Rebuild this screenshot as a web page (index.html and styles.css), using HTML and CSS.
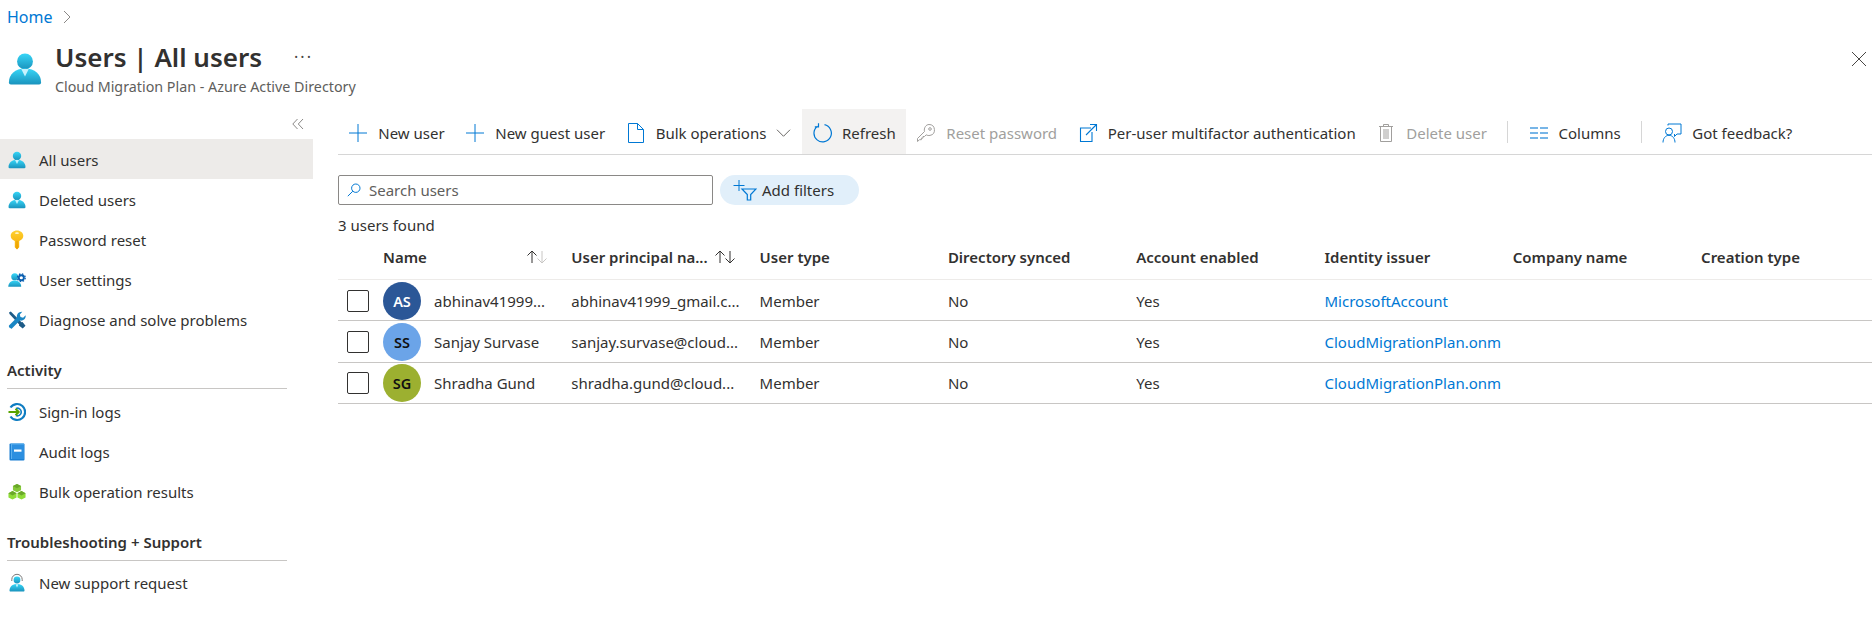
FILE: index.html
```html
<!DOCTYPE html>
<html lang="en">
<head>
    <meta charset="UTF-8">
    <meta name="viewport" content="width=device-width, initial-scale=1.0">
    <title>Users | All users</title>
    <link rel="stylesheet" href="styles.css">
</head>
<body>
    <svg class="defs" width="0" height="0">
        <defs>
            <linearGradient id="cyan" x1="0" y1="0" x2="0" y2="1">
                <stop offset="0" stop-color="#37d6f7"/>
                <stop offset="1" stop-color="#1a93bd"/>
            </linearGradient>
            <linearGradient id="gold" x1="0" y1="0" x2="0" y2="1">
                <stop offset="0" stop-color="#fed02f"/>
                <stop offset="1" stop-color="#f5a800"/>
            </linearGradient>
            <symbol id="person" viewBox="0 0 18 18">
                <circle cx="9" cy="5" r="4.2" fill="url(#cyan)"/>
                <path d="M.5 16c0-4 3.200-7.200 8.500-7.200s8.500 3.200 8.500 7.200c0 .7-.4 1.200-1 1.200h-15c-.6 0-1-.5-1-1.200z" fill="url(#cyan)"/>
                <path d="M7 9l2 4 2-4z" fill="#c6f2fd"/>
            </symbol>
        </defs>
    </svg>

    <nav class="breadcrumb">
        <a href="#">Home</a>
        <svg class="crumb-chevron" viewBox="0 0 8 14"><path d="M1 1l6 6-6 6" fill="none" stroke="#8a8886"/></svg>
    </nav>

    <header class="blade-header">
        <svg class="blade-icon"><use href="#person"/></svg>
        <div class="blade-titles">
            <div class="title-row">
                <h1>Users | All users</h1>
                <span class="more">&middot;&middot;&middot;</span>
            </div>
            <p class="subtitle">Cloud Migration Plan - Azure Active Directory</p>
        </div>
        <svg class="close" viewBox="0 0 14 14"><path d="M0 0l14 14M14 0L0 14" stroke="#484644" fill="none"/></svg>
    </header>

    <div class="blade-body">
        <aside class="sidebar">
            <div class="collapse">
                <svg viewBox="0 0 12 12" width="12" height="12"><path d="M5.500 1L.8 6l4.700 5M11 1L6.300 6l4.700 5" fill="none" stroke="#8a8886"/></svg>
            </div>
            <a class="nav-item selected" href="#"><svg class="nav-icon"><use href="#person"/></svg>All users</a>
            <a class="nav-item" href="#"><svg class="nav-icon"><use href="#person"/></svg>Deleted users</a>
            <a class="nav-item" href="#">
                <svg class="nav-icon" viewBox="0 0 18 20"><path d="M9 .5c3.500 0 6.300 2.300 6.300 5.300 0 2.400-1.600 4.300-4.100 5.200v6.200L9 19.500l-2.200-2.300V11C4.300 10.100 2.700 8.200 2.700 5.800 2.700 2.800 5.500.5 9 .5z" fill="url(#gold)"/><rect x="7.200" y="2.300" width="3.600" height="1.800" rx=".9" fill="#fff3c4"/><path d="M9 11v8" stroke="#e09a00" stroke-width=".8"/></svg>
                Password reset
            </a>
            <a class="nav-item" href="#">
                <svg class="nav-icon" viewBox="0 0 20 18"><circle cx="7.500" cy="5.500" r="3.900" fill="url(#cyan)"/><path d="M.3 16.500c0-4 3-7 7.200-7s7.200 3 7.200 7z" fill="url(#cyan)"/><circle cx="14.800" cy="6.500" r="3.400" fill="#fff"/><circle cx="14.800" cy="6.500" r="2.800" fill="none" stroke="#0a5fb0" stroke-width="2"/><circle cx="14.800" cy="6.500" r="4.300" fill="none" stroke="#0a5fb0" stroke-width="1.500" stroke-dasharray="1.700 1.700"/></svg>
                User settings
            </a>
            <a class="nav-item" href="#">
                <svg class="nav-icon" viewBox="0 0 18 18"><path d="M1 1.500L2.800.5l10.700 10.700 1-.3 3 3.800-2.800 2.800-3.800-3 .3-1L1.500 3z" fill="#1d5b87"/><path d="M1 14.500l8-8C8.300 3.500 10.500.5 14.300.7L11.800 3.400l.7 2.600 2.600.7 2.600-2.500c.3 3.800-2.800 6-5.800 5.300l-8 8c-1 .9-3.700-1.500-2.900-3z" fill="#1a86c4"/></svg>
                Diagnose and solve problems
            </a>

            <h2 class="nav-heading">Activity</h2>
            <a class="nav-item" href="#">
                <svg class="nav-icon" viewBox="0 0 18 18"><path d="M2.500 4.500A8 8 0 1 1 2.500 13.500" fill="none" stroke="#0f7dc2" stroke-width="2.200"/><path d="M8 5.500a3.800 3.800 0 1 1 0 7" fill="none" stroke="#0f7dc2" stroke-width="1.600"/><path d="M.5 9h10M7.500 5.800L10.700 9l-3.200 3.200" fill="none" stroke="#57a300" stroke-width="2"/></svg>
                Sign-in logs
            </a>
            <a class="nav-item" href="#">
                <svg class="nav-icon" viewBox="0 0 18 18"><rect x="1.500" y=".5" width="15" height="17" rx="1" fill="#1a7fd4"/><rect x="3" y=".5" width="13" height="15.500" fill="#5ab0ee"/><rect x="4" y="1.500" width="12" height="14.500" fill="#2c8fe0"/><rect x="6" y="6.500" width="7.500" height="2.200" fill="#fff"/></svg>
                Audit logs
            </a>
            <a class="nav-item" href="#">
                <svg class="nav-icon" viewBox="0 0 20 20"><path d="M10 1l4.500 2.400V8L10 10.400 5.500 8V3.400z" fill="#86c93a"/><path d="M5 9l4.500 2.400V16L5 18.400.5 16v-4.600z" fill="#8fdc38"/><path d="M15 9l4.500 2.400V16L15 18.400 10.500 16v-4.600z" fill="#8fdc38"/><path d="M10 1l4.500 2.400L10 5.800 5.500 3.400zM5 9l4.500 2.400L5 13.800.5 11.400zM15 9l4.500 2.400-4.500 2.400-4.500-2.400z" fill="#6aa82a"/></svg>
                Bulk operation results
            </a>

            <h2 class="nav-heading">Troubleshooting + Support</h2>
            <a class="nav-item" href="#">
                <svg class="nav-icon" viewBox="0 0 18 18"><path d="M3.800 7V5.500a5.200 5.200 0 0 1 10.400 0V7" fill="none" stroke="#7a7a7a" stroke-width="1"/><circle cx="9" cy="6" r="3.400" fill="url(#cyan)"/><path d="M1.500 16.500c0-3.800 3-6.500 7.500-6.500s7.500 2.700 7.500 6.500c0 .6-.4 1-1 1h-13c-.6 0-1-.4-1-1z" fill="url(#cyan)"/><path d="M7.500 10.200L9 13.500l1.500-3.300z" fill="#c6f2fd"/></svg>
                New support request
            </a>
        </aside>

        <main class="content">
            <div class="toolbar">
                <button class="tool" type="button">
                    <svg class="tool-icon" viewBox="0 0 20 20"><path d="M10 1v18M1 10h18" stroke="#0078d4" fill="none"/></svg>
                    New user
                </button>
                <button class="tool" type="button">
                    <svg class="tool-icon" viewBox="0 0 20 20"><path d="M10 1v18M1 10h18" stroke="#0078d4" fill="none"/></svg>
                    New guest user
                </button>
                <button class="tool" type="button">
                    <svg class="tool-icon" viewBox="0 0 20 20"><path d="M2.500 .5h9l6 6v13h-15zM11.500 .5v6h6" stroke="#0078d4" fill="none"/></svg>
                    Bulk operations
                    <svg class="tool-chevron" viewBox="0 0 16 10"><path d="M1 1.500l7 7 7-7" stroke="#605e5c" fill="none"/></svg>
                </button>
                <button class="tool hovered" type="button">
                    <svg class="tool-icon" viewBox="0 0 20 20"><path d="M5.500 3.200a8.700 8.700 0 1 0 7-1.500M6.500 .2v3.600H2.800" stroke="#0078d4" fill="none" stroke-width="1.200"/></svg>
                    Refresh
                </button>
                <button class="tool disabled" type="button">
                    <svg class="tool-icon" viewBox="0 0 20 20"><path d="M13 1.500a5.500 5.500 0 0 1 1 10.900c-1.500.3-2.800 0-3.800-.6L8.500 13.500H7v1.600H5.400v1.600H3.500L1.500 18.500v-3l7-7c-.9-3.500 1.500-7 4.500-7z" stroke="#a19f9d" fill="none"/><circle cx="14" cy="6" r="1.300" stroke="#a19f9d" fill="none"/></svg>
                    Reset password
                </button>
                <button class="tool" type="button">
                    <svg class="tool-icon" viewBox="0 0 20 20"><path d="M13 5H2.500v13.500H14V9M8 12L18 2M12 1.500h6.500V8" stroke="#0078d4" fill="none" stroke-width="1.100"/></svg>
                    Per-user multifactor authentication
                </button>
                <button class="tool disabled" type="button">
                    <svg class="tool-icon" viewBox="0 0 20 20"><path d="M3 3.500h14M7.500 3.500V1.500h5v2M4.500 3.500v15h11v-15M8 6v10M10 6v10M12 6v10" stroke="#a19f9d" fill="none"/></svg>
                    Delete user
                </button>
                <span class="tool-sep"></span>
                <button class="tool" type="button">
                    <svg class="tool-icon" viewBox="0 0 20 20"><path d="M1 5h8M11 5h8M1 10h8M11 10h8M1 15h8M11 15h8" stroke="#4b9de0" fill="none" stroke-width="1.400"/></svg>
                    Columns
                </button>
                <span class="tool-sep"></span>
                <button class="tool" type="button">
                    <svg class="tool-icon" viewBox="0 0 20 20"><path d="M6 2.500V1h13v10h-4l-2.500 2.500V11" stroke="#0078d4" fill="none"/><circle cx="7" cy="8.500" r="3.500" stroke="#0078d4" fill="none"/><path d="M1 19.500c0-4 2.500-7.200 6-7.200s6 3.200 6 7.200" stroke="#0078d4" fill="none"/></svg>
                    Got feedback?
                </button>
            </div>

            <div class="filters">
                <label class="search">
                    <svg viewBox="0 0 14 14" width="14" height="14"><circle cx="8.800" cy="5.200" r="4.200" stroke="#0078d4" fill="none"/><path d="M5.800 8.200L.8 13.200" stroke="#0078d4" fill="none"/></svg>
                    <span>Search users</span>
                </label>
                <button class="pill" type="button">
                    <svg viewBox="0 0 24 22" width="24" height="22"><path d="M6 1v11M.5 6.500h11" stroke="#0078d4" fill="none"/><path d="M9 10h14l-5.300 5.500v5.500h-3.400v-5.500z" stroke="#0078d4" fill="none" stroke-width="1.200"/></svg>
                    Add filters
                </button>
            </div>

            <div class="found">3 users found</div>

            <div class="grid-row grid-head">
                <div></div>
                <div class="sort-cell name-head">Name
                    <svg class="sort" viewBox="0 0 22 14"><path d="M6 13V1M1.500 5.500L6 1l4.500 4.500" stroke="#323130" fill="none"/><path d="M16 1v12M11.500 8.500L16 13l4.500-4.500" stroke="#c8c6c4" fill="none"/></svg>
                </div>
                <div class="sort-cell">User principal na...
                    <svg class="sort" viewBox="0 0 22 14"><path d="M6 13V1M1.500 5.500L6 1l4.500 4.500" stroke="#323130" fill="none"/><path d="M16 1v12M11.500 8.500L16 13l4.500-4.500" stroke="#323130" fill="none"/></svg>
                </div>
                <div>User type</div>
                <div>Directory synced</div>
                <div>Account enabled</div>
                <div>Identity issuer</div>
                <div>Company name</div>
                <div>Creation type</div>
            </div>

            <div class="grid-row user-row">
                <div><span class="check"></span></div>
                <div class="name-cell"><span class="avatar avatar-as">AS</span>abhinav41999...</div>
                <div>abhinav41999_gmail.c...</div>
                <div>Member</div>
                <div>No</div>
                <div>Yes</div>
                <div><a class="issuer" href="#">MicrosoftAccount</a></div>
                <div></div>
                <div></div>
            </div>
            <div class="grid-row user-row">
                <div><span class="check"></span></div>
                <div class="name-cell"><span class="avatar avatar-ss">SS</span>Sanjay Survase</div>
                <div>sanjay.survase@cloud...</div>
                <div>Member</div>
                <div>No</div>
                <div>Yes</div>
                <div><a class="issuer" href="#">CloudMigrationPlan.onmicrosoft.com</a></div>
                <div></div>
                <div></div>
            </div>
            <div class="grid-row user-row">
                <div><span class="check"></span></div>
                <div class="name-cell"><span class="avatar avatar-sg">SG</span>Shradha Gund</div>
                <div>shradha.gund@cloud...</div>
                <div>Member</div>
                <div>No</div>
                <div>Yes</div>
                <div><a class="issuer" href="#">CloudMigrationPlan.onmicrosoft.com</a></div>
                <div></div>
                <div></div>
            </div>
        </main>
    </div>
</body>
</html>
```

FILE: styles.css
```css
html, body {
    height: 100%;
}
body {
    margin: 0;
    background: #fff;
    color: #323130;
    font-family: "Noto Sans", "Open Sans", sans-serif;
    font-size: 15px;
    overflow: hidden;
}
a {
    color: inherit;
    text-decoration: none;
}
.defs {
    display: block;
    height: 0;
}

/* top of the blade */
.breadcrumb {
    height: 34px;
    padding-left: 7px;
    display: flex;
    align-items: center;
    gap: 10px;
    font-size: 16px;
}
.breadcrumb a {
    color: #0078d4;
}
.crumb-chevron {
    width: 8px;
    height: 14px;
}
.blade-header {
    height: 75px;
    padding: 5px 6px 0 8px;
    box-sizing: border-box;
    display: flex;
    align-items: flex-start;
}
.blade-icon {
    width: 34px;
    height: 36px;
    margin-top: 12px;
    margin-right: 13px;
}
.blade-titles {
    flex: 1;
}
.title-row {
    display: flex;
    align-items: center;
    height: 36px;
}
h1 {
    margin: 0;
    font-size: 26px;
    font-weight: 600;
    line-height: 36px;
}
.more {
    margin-left: 32px;
    font-size: 16px;
    letter-spacing: 2px;
    color: #484644;
}
.subtitle {
    margin: 2px 0 0;
    font-size: 14.3px;
    line-height: 20px;
    color: #605e5c;
}
.close {
    width: 14px;
    height: 14px;
    margin-top: 13px;
}

.blade-body {
    display: flex;
}

/* left menu */
.sidebar {
    width: 313px;
    flex-shrink: 0;
}
.collapse {
    height: 30px;
    display: flex;
    justify-content: flex-end;
    align-items: center;
    padding-right: 9px;
}
.nav-item {
    height: 40.2px;
    box-sizing: border-box;
    padding: 1px 0 0 8px;
    display: flex;
    align-items: center;
    gap: 13px;
}
.nav-item.selected {
    background: #edebe9;
}
.nav-icon {
    width: 18px;
    height: 20px;
    flex-shrink: 0;
}
.nav-heading {
    margin: 0 26px 2px 7px;
    height: 49px;
    box-sizing: border-box;
    padding-top: 20px;
    font-size: 15px;
    font-weight: 600;
    line-height: 20px;
    border-bottom: 1px solid #c8c6c4;
}

/* main area */
.content {
    flex: 1;
    min-width: 0;
    margin-left: 25px;
}
.toolbar {
    height: 46px;
    box-sizing: border-box;
    border-bottom: 1px solid #d6d6d6;
    display: flex;
    align-items: stretch;
}
.tool {
    border: 0;
    background: none;
    padding: 2px 10.3px 0;
    display: flex;
    align-items: center;
    gap: 10px;
    color: #323130;
    font: inherit;
    white-space: nowrap;
}
.tool.hovered {
    background: #f3f2f1;
}
.tool.disabled {
    color: #a19f9d;
}
.tool-icon {
    width: 20px;
    height: 20px;
    flex-shrink: 0;
}
.tool-chevron {
    width: 15px;
    height: 10px;
}
.tool-sep {
    width: 1px;
    height: 22px;
    margin: 12px 10px 0;
    background: #d6d6d6;
}

.filters {
    display: flex;
    gap: 7px;
    margin-top: 20px;
}
.search {
    width: 375px;
    height: 30px;
    box-sizing: border-box;
    border: 1px solid #8a8886;
    border-radius: 2px;
    display: flex;
    align-items: center;
    gap: 8px;
    padding-left: 8px;
    color: #605e5c;
}
.pill {
    width: 139px;
    height: 30px;
    border: 0;
    padding: 0 0 0 13px;
    border-radius: 15px;
    background: #e1effa;
    display: flex;
    align-items: center;
    gap: 5px;
    color: #323130;
    font: inherit;
}
.found {
    margin-top: 10px;
    line-height: 20px;
}

/* users list */
.grid-row {
    display: grid;
    grid-template-columns: 45px repeat(8, 188.3px);
    align-items: center;
    box-sizing: border-box;
}
.grid-row > div {
    padding-right: 8px;
    white-space: nowrap;
    overflow: hidden;
    box-sizing: border-box;
}
.grid-head {
    height: 45px;
    border-bottom: 1px solid #edebe9;
    font-weight: 600;
}
.sort-cell {
    display: flex;
    align-items: center;
    gap: 6px;
}
.name-head {
    justify-content: space-between;
    padding-right: 23px !important;
}
.sort {
    width: 22px;
    height: 14px;
    flex-shrink: 0;
}
.user-row {
    height: 41.3px;
    border-bottom: 1px solid #c8c6c4;
    line-height: 22px;
}
.user-row > div {
    padding-top: 1px;
}
.check {
    display: block;
    width: 22px;
    height: 22px;
    box-sizing: border-box;
    margin-left: 9px;
    border: 1px solid #323130;
    border-radius: 2px;
}
.name-cell {
    display: flex;
    align-items: center;
    gap: 13px;
}
.avatar {
    width: 38px;
    height: 38px;
    border-radius: 50%;
    display: flex;
    align-items: center;
    justify-content: center;
    flex-shrink: 0;
    font-size: 14.5px;
    font-weight: 600;
}
.avatar-as {
    background: #2b5797;
    color: #fff;
}
.avatar-ss {
    background: #6ba4e8;
    color: #111;
}
.avatar-sg {
    background: #9cb030;
    color: #111;
}
.issuer {
    display: block;
    width: 177px;
    overflow: hidden;
    color: #0078d4;
}
```
